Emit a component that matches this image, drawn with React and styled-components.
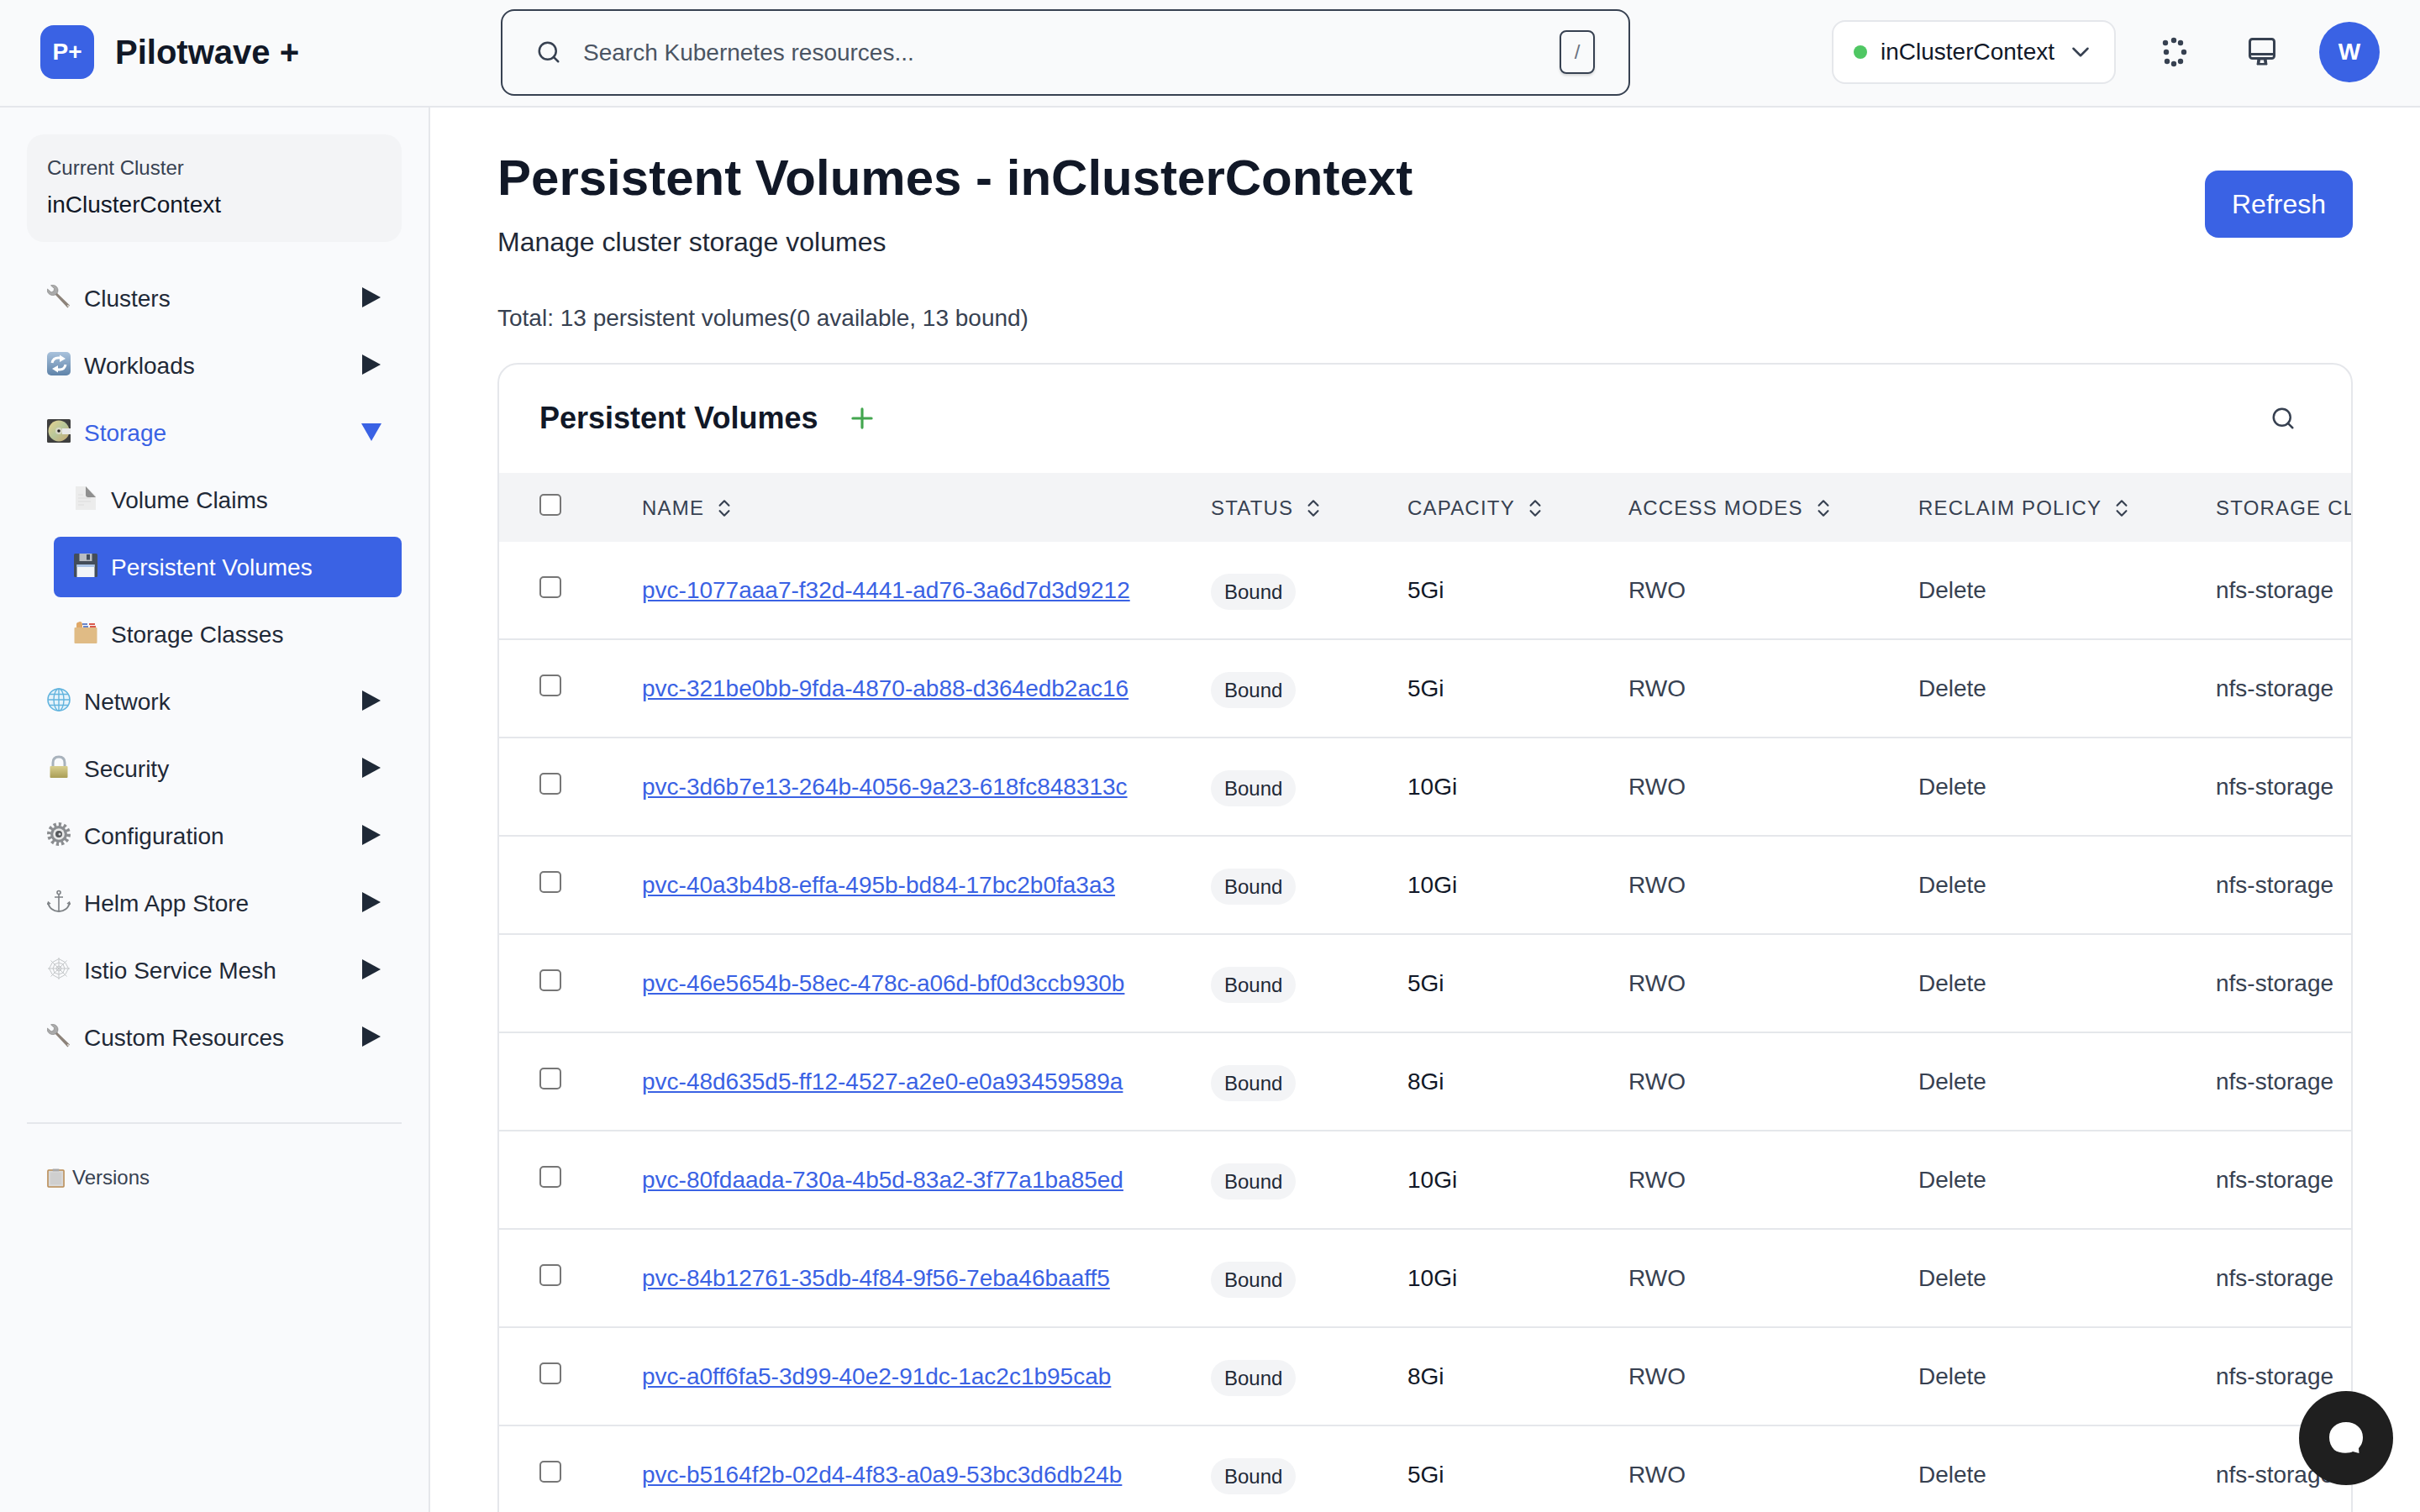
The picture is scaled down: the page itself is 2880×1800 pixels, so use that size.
import styled, { createGlobalStyle } from 'styled-components';
import { ChevronDown, ChevronsUpDown, Plus, Search } from 'lucide-react';

const GlobalStyle = createGlobalStyle`
  html, body {
    margin: 0;
    height: 100%;
    background: #fff;
    font-family: 'Liberation Sans', Arial, sans-serif;
    color: #111827;
  }
  * { box-sizing: border-box; }
`;

const PRIMARY = '#3a62e4';

const volumes = [
  ['pvc-1077aaa7-f32d-4441-ad76-3a6d7d3d9212', '5Gi'],
  ['pvc-321be0bb-9fda-4870-ab88-d364edb2ac16', '5Gi'],
  ['pvc-3d6b7e13-264b-4056-9a23-618fc848313c', '10Gi'],
  ['pvc-40a3b4b8-effa-495b-bd84-17bc2b0fa3a3', '10Gi'],
  ['pvc-46e5654b-58ec-478c-a06d-bf0d3ccb930b', '5Gi'],
  ['pvc-48d635d5-ff12-4527-a2e0-e0a93459589a', '8Gi'],
  ['pvc-80fdaada-730a-4b5d-83a2-3f77a1ba85ed', '10Gi'],
  ['pvc-84b12761-35db-4f84-9f56-7eba46baaff5', '10Gi'],
  ['pvc-a0ff6fa5-3d99-40e2-91dc-1ac2c1b95cab', '8Gi'],
  ['pvc-b5164f2b-02d4-4f83-a0a9-53bc3d6db24b', '5Gi'],
];

const columns = [
  { label: 'Name', width: 677 },
  { label: 'Status', width: 234 },
  { label: 'Capacity', width: 263 },
  { label: 'Access Modes', width: 345 },
  { label: 'Reclaim Policy', width: 354 },
  { label: 'Storage Class', width: 400 },
];

const Wrench = () => (
  <svg viewBox="0 0 28 28" width="28" height="28">
    <path d="M10.500 8.500 L27 24.500 L24.500 27.500 L8.500 10.500 Z" fill="#8c8279" />
    <path d="M0.500 5 L5 9 L8 7.500 L8.500 4.500 L4.500 0.800 C8 -0.500 12.500 1.500 13 6 C13.300 9.500 11 12 8 12.500 C3 13 -0.500 9.500 0.500 5 Z" fill="#aaaaaa" stroke="#7c7c7c" strokeWidth="0.6" />
    <circle cx="25" cy="25" r="1" fill="#e5e0da" />
  </svg>
);

const Cycle = () => (
  <svg viewBox="0 0 28 28" width="28" height="28">
    <defs>
      <linearGradient id="cycleBg" x1="0" y1="0" x2="0" y2="1">
        <stop offset="0" stopColor="#a9c2dc" />
        <stop offset="1" stopColor="#5f83a9" />
      </linearGradient>
    </defs>
    <rect width="28" height="28" rx="5" fill="url(#cycleBg)" />
    <path d="M6 13 C7 8 11 6.500 15 7 L18 8.500" fill="none" stroke="#fff" strokeWidth="3" />
    <path d="M15 3.500 L22 8 L15 12 Z" fill="#fff" />
    <path d="M22 15 C21 20 17 21.500 13 21 L10 19.500" fill="none" stroke="#fff" strokeWidth="3" />
    <path d="M13 24.500 L6 20 L13 16 Z" fill="#fff" />
  </svg>
);

const Disc = () => (
  <svg viewBox="0 0 28 28" width="28" height="28">
    <defs>
      <linearGradient id="discFace" x1="0" y1="0" x2="1" y2="1">
        <stop offset="0" stopColor="#e9d28f" />
        <stop offset="0.5" stopColor="#b7c79a" />
        <stop offset="1" stopColor="#c9a56d" />
      </linearGradient>
    </defs>
    <rect width="28" height="28" rx="1.500" fill="#3f3f3f" />
    <circle cx="14" cy="14" r="12.500" fill="url(#discFace)" />
    <rect x="18" y="11" width="10" height="7" fill="#e8e8e8" />
    <circle cx="14" cy="14" r="4" fill="#d8d8c8" />
    <circle cx="14" cy="14" r="1.800" fill="#222" />
  </svg>
);

const PageIcon = () => (
  <svg viewBox="0 0 28 28" width="28" height="28">
    <path d="M2 0 H14 L26 11 V28 H2 Z" fill="#ececec" />
    <path d="M14 0 L26 13 H17 C15 13 14 12 14 10 Z" fill="#8f8f8f" />
    <path d="M5 10 H11 M5 14 H20 M5 18 H20 M5 22 H12" stroke="#dcdcdc" strokeWidth="1" />
  </svg>
);

const Floppy = () => (
  <svg viewBox="0 0 28 28" width="28" height="28">
    <rect width="28" height="28" rx="1.500" fill="#434d5a" />
    <rect x="6.500" y="0" width="15" height="9" fill="#b9bdc2" />
    <rect x="15" y="1" width="4" height="6.500" fill="#434d5a" />
    <rect x="3.500" y="13" width="21" height="15" fill="#f2f5f8" />
    <rect x="3.500" y="13" width="21" height="3" fill="#a9c3e6" />
  </svg>
);

const CardBox = () => (
  <svg viewBox="0 0 28 28" width="28" height="28">
    <path d="M3 8 V4 C3 2.500 4 2 7 1 C9 1 9.500 2 10 4 V8 Z" fill="#e0a868" />
    <rect x="10" y="3" width="6" height="2" fill="#6a86c9" />
    <rect x="11" y="6" width="6" height="2" fill="#6a86c9" />
    <rect x="18" y="3" width="7" height="2" fill="#d9594c" />
    <rect x="19" y="6" width="7" height="2" fill="#d9594c" />
    <rect x="0.500" y="8" width="27" height="19" rx="1" fill="#e0bb85" />
  </svg>
);

const Globe = () => (
  <svg viewBox="0 0 28 28" width="28" height="28">
    <circle cx="14" cy="14" r="13" fill="#e6f3fb" stroke="#63b4de" strokeWidth="1.600" />
    <ellipse cx="14" cy="14" rx="6" ry="13" fill="none" stroke="#63b4de" strokeWidth="1.400" />
    <path d="M14 1 V27 M1 14 H27 M3 7.500 H25 M3 20.500 H25" stroke="#63b4de" strokeWidth="1.400" />
  </svg>
);

const Lock = () => (
  <svg viewBox="0 0 28 28" width="28" height="28">
    <defs>
      <linearGradient id="lockBody" x1="0" y1="0" x2="0" y2="1">
        <stop offset="0" stopColor="#d9cf8f" />
        <stop offset="1" stopColor="#a99d55" />
      </linearGradient>
    </defs>
    <path d="M7 14 V9 C7 4 10 2 14 2 C18 2 21 4 21 9 V14" fill="none" stroke="#a8b2bc" strokeWidth="3" />
    <rect x="3.500" y="13" width="21" height="14" rx="1" fill="url(#lockBody)" />
  </svg>
);

const Gear = () => (
  <svg viewBox="0 0 28 28" width="28" height="28">
    <circle cx="14" cy="14" r="11" fill="none" stroke="#8b8d90" strokeWidth="6" strokeDasharray="3 2.700" />
    <circle cx="14" cy="14" r="10" fill="#8a8d91" />
    <circle cx="14" cy="14" r="6.800" fill="#e8e8e8" />
    <circle cx="14" cy="14" r="4" fill="#55585c" />
    <circle cx="15" cy="14" r="1.500" fill="#d8d8d8" />
  </svg>
);

const Anchor = () => (
  <svg viewBox="0 0 28 28" width="28" height="28" fill="none" stroke="#7d8185" strokeWidth="1.600">
    <circle cx="14" cy="3.500" r="2" />
    <path d="M14 5.500 V26 M9 9 H19" />
    <path d="M1.500 16 C2 22 8 26 14 26 C20 26 26 22 26.500 16" strokeWidth="2" />
    <path d="M0.500 18 L1.500 15 L4 17 M27.500 18 L26.500 15 L24 17" />
  </svg>
);

const Web = () => (
  <svg viewBox="0 0 28 28" width="28" height="28" fill="none" stroke="#c4c7c9" strokeWidth="1">
    <path d="M14 1 V27 M1 14 H27 M4.500 4.500 L23.500 23.500 M23.500 4.500 L4.500 23.500" />
    <path d="M14 2.500 L21.500 6.500 L25.500 14 L21.500 21.500 L14 25.500 L6.500 21.500 L2.500 14 L6.500 6.500 Z" />
    <path d="M14 7 L19 9 L21 14 L19 19 L14 21 L9 19 L7 14 L9 9 Z" />
    <path d="M14 11 L16 12 L17 14 L16 16 L14 17 L12 16 L11 14 L12 12 Z" />
  </svg>
);

const Clipboard = () => (
  <svg viewBox="0 0 22 24" width="21" height="23">
    <rect x="1" y="2" width="20" height="21" rx="1" fill="#d9d9d9" stroke="#b98a52" strokeWidth="1.600" />
    <rect x="4" y="5" width="14" height="15" fill="#cfcfcf" />
    <rect x="7" y="0.500" width="8" height="3" fill="#a8a8a8" />
  </svg>
);

const PageShell = styled.div`
  display: flex;
  flex-direction: column;
  height: 1800px;
  overflow: hidden;
`;

const TopBar = styled.header`
  display: flex;
  align-items: center;
  flex: none;
  height: 128px;
  padding: 0 48px 2px 48px;
  background: #f9fafb;
  border-bottom: 2px solid #e5e7eb;
`;

const Brand = styled.div`
  display: flex;
  align-items: center;
  gap: 25px;
  width: 548px;
`;

const LogoMark = styled.div`
  display: flex;
  align-items: center;
  justify-content: center;
  width: 64px;
  height: 64px;
  border-radius: 16px;
  background: ${PRIMARY};
  color: #fff;
  font-size: 28px;
  font-weight: 700;
`;

const BrandName = styled.div`
  font-size: 40px;
  font-weight: 700;
  color: #111827;
`;

const SearchBox = styled.div`
  display: flex;
  align-items: center;
  width: 1344px;
  height: 103px;
  padding: 0 40px 0 40px;
  border: 2px solid #374151;
  border-radius: 16px;
  background: #f9fafb;
  color: #374151;
`;

const SearchHint = styled.span`
  flex: 1;
  margin-left: 26px;
  padding-top: 2px;
  font-size: 28px;
  color: #4b5563;
`;

const SlashKey = styled.kbd`
  display: flex;
  align-items: center;
  justify-content: center;
  width: 42px;
  height: 52px;
  border: 2px solid #374151;
  border-radius: 8px;
  box-shadow: 0 2px 3px rgba(0, 0, 0, 0.15);
  font-family: inherit;
  font-size: 24px;
  color: #6b7280;
`;

const TopActions = styled.div`
  display: flex;
  align-items: center;
  gap: 32px;
  margin-left: auto;
`;

const ClusterSelect = styled.div`
  display: flex;
  align-items: center;
  width: 338px;
  height: 76px;
  margin-right: 2px;
  padding: 0 23px 0 24px;
  border: 2px solid #e5e7eb;
  border-radius: 16px;
  background: #fff;
  font-size: 28px;
  color: #111827;
`;

const StatusDot = styled.span`
  flex: none;
  width: 16px;
  height: 16px;
  margin-right: 16px;
  border-radius: 50%;
  background: #4fc763;
`;

const ClusterName = styled.span`
  flex: 1;
`;

const IconSlot = styled.div`
  display: flex;
  align-items: center;
  justify-content: center;
  width: 72px;
  height: 72px;
`;

const Avatar = styled.div`
  display: flex;
  align-items: center;
  justify-content: center;
  width: 72px;
  height: 72px;
  border-radius: 50%;
  background: ${PRIMARY};
  color: #fff;
  font-size: 28px;
  font-weight: 700;
`;

const Body = styled.div`
  display: flex;
  flex: 1;
  min-height: 0;
`;

const Sidebar = styled.aside`
  flex: none;
  width: 512px;
  padding: 32px 32px 0;
  background: #f9fafc;
  border-right: 2px solid #e5e7eb;
`;

const ClusterCard = styled.div`
  height: 128px;
  padding: 24px 24px 0;
  margin-bottom: 31px;
  border-radius: 20px;
  background: #f3f4f6;
`;

const ClusterLabel = styled.div`
  font-size: 24px;
  line-height: 32px;
  color: #374151;
`;

const ClusterValue = styled.div`
  margin-top: 8px;
  font-size: 28px;
  line-height: 40px;
  color: #111827;
`;

const NavList = styled.nav`
  display: flex;
  flex-direction: column;
  gap: 8px;
`;

const NavRow = styled.div`
  display: flex;
  align-items: center;
  height: 72px;
  margin-left: ${(p) => (p.$sub ? '32px' : '0')};
  padding-left: 24px;
  padding-right: 24px;
  border-radius: 8px;
  background: ${(p) => (p.$active ? PRIMARY : 'transparent')};
  color: ${(p) => (p.$active ? '#fff' : p.$open ? PRIMARY : '#1f2937')};
  font-size: 28px;
`;

const NavIcon = styled.span`
  display: flex;
  align-items: center;
  justify-content: center;
  flex: none;
  width: 28px;
  height: 28px;
  margin-right: 16px;
  margin-top: -4px;
`;

const NavLabel = styled.span`
  flex: 1;
  padding-top: 1px;
`;

const Caret = styled.svg`
  display: block;
  flex: none;
  width: 24px;
  height: 24px;
  margin-top: -2px;
  fill: ${(p) => (p.$open ? PRIMARY : '#1f2937')};
`;

const SideDivider = styled.hr`
  height: 2px;
  margin: 65px 0 0;
  border: 0;
  background: #e5e7eb;
`;

const VersionLink = styled.div`
  display: flex;
  align-items: center;
  gap: 9px;
  margin-top: 50px;
  padding-left: 24px;
  font-size: 24px;
  color: #374151;
`;

const Main = styled.main`
  flex: 1;
  min-width: 0;
  padding: 48px 80px 0;
  background: #fff;
`;

const PageHead = styled.div`
  display: flex;
  align-items: center;
  justify-content: space-between;
`;

const PageTitle = styled.h1`
  margin: 0;
  font-size: 60px;
  line-height: 72px;
  font-weight: 700;
  color: #111827;
`;

const PageSub = styled.p`
  margin: 18px 0 0;
  font-size: 32px;
  line-height: 44px;
  color: #1f2937;
`;

const RefreshButton = styled.button`
  width: 176px;
  height: 80px;
  border: 0;
  border-radius: 16px;
  background: ${PRIMARY};
  color: #fff;
  font-family: inherit;
  font-size: 32px;
  font-weight: 500;
`;

const Totals = styled.div`
  margin-top: 49px;
  font-size: 28px;
  line-height: 40px;
  color: #374151;
`;

const TableCard = styled.section`
  margin-top: 33px;
  border: 2px solid #e5e7eb;
  border-radius: 24px 24px 0 0;
  overflow: hidden;
`;

const CardHead = styled.div`
  display: flex;
  align-items: center;
  height: 129px;
  padding: 0 48px 2px;
  gap: 34px;
`;

const CardTitle = styled.h2`
  margin: 0;
  font-size: 36px;
  font-weight: 700;
  color: #111827;
`;

const CardSearch = styled.span`
  display: flex;
  margin-left: auto;
  margin-right: 18px;
  color: #374151;
`;

const Table = styled.table`
  table-layout: fixed;
  width: 2443px;
  border-collapse: separate;
  border-spacing: 0;
`;

const HeadCell = styled.th`
  height: 82px;
  padding: 2px 0 0;
  background: #f3f4f6;
  text-align: left;
  font-size: 24px;
  font-weight: 400;
  letter-spacing: 1.2px;
  text-transform: uppercase;
  color: #374151;
  white-space: nowrap;
`;

const SortLabel = styled.span`
  display: inline-flex;
  align-items: center;
  gap: 11px;
  svg { color: #374151; }
`;

const Cell = styled.td`
  height: 117px;
  padding: 1px 0 0;
  border-bottom: 2px solid #e5e7eb;
  font-size: 28px;
  color: ${(p) => (p.$strong ? '#111827' : '#374151')};
  white-space: nowrap;
`;

const CheckCell = styled.div`
  display: flex;
  padding-left: 48px;
  margin-top: -8px;
`;

const Check = styled.input.attrs({ type: 'checkbox' })`
  appearance: none;
  display: block;
  width: 26px;
  height: 26px;
  margin: 0;
  border: 2px solid #767676;
  border-radius: 5px;
  background: #fff;
`;

const VolumeLink = styled.a`
  color: ${PRIMARY};
  text-decoration: underline;
`;

const Badge = styled.span`
  display: inline-block;
  height: 43px;
  margin-top: 3px;
  padding: 0 16px;
  border-radius: 22px;
  background: #f3f4f6;
  font-size: 24px;
  line-height: 44px;
  color: #1f2937;
`;

const ChatBubble = styled.button`
  position: fixed;
  right: 32px;
  bottom: 32px;
  display: flex;
  align-items: center;
  justify-content: center;
  width: 112px;
  height: 112px;
  padding: 0;
  border: 0;
  border-radius: 50%;
  background: #1f1f1f;
`;

const navGroups = [
  { label: 'Clusters', icon: Wrench },
  { label: 'Workloads', icon: Cycle },
  {
    label: 'Storage',
    icon: Disc,
    open: true,
    children: [
      { label: 'Volume Claims', icon: PageIcon },
      { label: 'Persistent Volumes', icon: Floppy, active: true },
      { label: 'Storage Classes', icon: CardBox },
    ],
  },
  { label: 'Network', icon: Globe },
  { label: 'Security', icon: Lock },
  { label: 'Configuration', icon: Gear },
  { label: 'Helm App Store', icon: Anchor },
  { label: 'Istio Service Mesh', icon: Web },
  { label: 'Custom Resources', icon: Wrench },
];

const NavItem = ({ item, sub }) => {
  const Icon = item.icon;

  return (
    <NavRow $sub={sub} $active={item.active} $open={item.open}>
      <NavIcon>
        <Icon />
      </NavIcon>
      <NavLabel>{item.label}</NavLabel>
      {!sub && (
        <Caret viewBox="0 0 24 24" $open={item.open}>
          {item.open ? <path d="M0 2 H24 L12 23 Z" /> : <path d="M1 0 L23 12 L1 24 Z" />}
        </Caret>
      )}
    </NavRow>
  );
};

const NavGroup = ({ item }) => (
  <>
    <NavItem item={item} />
    {item.children && item.children.map((child) => <NavItem key={child.label} item={child} sub />)}
  </>
);

const App = () => (
  <PageShell>
    <GlobalStyle />
    <TopBar>
      <Brand>
        <LogoMark>P+</LogoMark>
        <BrandName>Pilotwave +</BrandName>
      </Brand>
      <SearchBox>
        <Search size={30} strokeWidth={2} />
        <SearchHint>Search Kubernetes resources...</SearchHint>
        <SlashKey>/</SlashKey>
      </SearchBox>
      <TopActions>
        <ClusterSelect>
          <StatusDot />
          <ClusterName>inClusterContext</ClusterName>
          <ChevronDown size={34} color="#374151" strokeWidth={1.8} />
        </ClusterSelect>
        <IconSlot>
          <svg viewBox="0 0 36 36" width="36" height="36" fill="#374151">
            <circle cx="7" cy="7" r="3.2" />
            <circle cx="17" cy="4" r="3.2" />
            <circle cx="25" cy="7" r="3.2" />
            <circle cx="8" cy="18" r="3.2" />
            <circle cx="29" cy="18" r="3.200" />
            <circle cx="9" cy="29" r="3.2" />
            <circle cx="17" cy="32" r="3.2" />
            <circle cx="25" cy="29" r="3.2" />
          </svg>
        </IconSlot>
        <IconSlot>
          <svg viewBox="0 0 36 36" width="36" height="36" fill="none" stroke="#374151">
            <rect x="3.500" y="2.500" width="29" height="23" rx="3" strokeWidth="3" />
            <path d="M3.500 20.500 H32.500" strokeWidth="3" />
            <path d="M13 26 L12 33 H24 L23 26 Z" fill="#374151" strokeWidth="1" />
            <path d="M16 27.500 H20 L20.500 31 H15.500 Z" fill="#f9fafb" stroke="none" />
          </svg>
        </IconSlot>
        <Avatar>W</Avatar>
      </TopActions>
    </TopBar>

    <Body>
      <Sidebar>
        <ClusterCard>
          <ClusterLabel>Current Cluster</ClusterLabel>
          <ClusterValue>inClusterContext</ClusterValue>
        </ClusterCard>
        <NavList>
          {navGroups.map((item) => (
            <NavGroup key={item.label} item={item} />
          ))}
        </NavList>
        <SideDivider />
        <VersionLink>
          <Clipboard />
          Versions
        </VersionLink>
      </Sidebar>

      <Main>
        <PageHead>
          <div>
            <PageTitle>Persistent Volumes - inClusterContext</PageTitle>
            <PageSub>Manage cluster storage volumes</PageSub>
          </div>
          <RefreshButton>Refresh</RefreshButton>
        </PageHead>
        <Totals>Total: 13 persistent volumes(0 available, 13 bound)</Totals>

        <TableCard>
          <CardHead>
            <CardTitle>Persistent Volumes</CardTitle>
            <Plus size={38} color="#43a64f" strokeWidth={2} />
            <CardSearch>
              <Search size={30} strokeWidth={2} />
            </CardSearch>
          </CardHead>
          <Table>
            <colgroup>
              <col width="170" />
              {columns.map((col) => (
                <col key={col.label} width={col.width} />
              ))}
            </colgroup>
            <thead>
              <tr>
                <HeadCell>
                  <CheckCell>
                    <Check />
                  </CheckCell>
                </HeadCell>
                {columns.map((col) => (
                  <HeadCell key={col.label}>
                    <SortLabel>
                      {col.label}
                      {col.label !== 'Storage Class' && <ChevronsUpDown size={26} strokeWidth={2} />}
                    </SortLabel>
                  </HeadCell>
                ))}
              </tr>
            </thead>
            <tbody>
              {volumes.map(([name, capacity]) => (
                <tr key={name}>
                  <Cell>
                    <CheckCell>
                      <Check />
                    </CheckCell>
                  </Cell>
                  <Cell>
                    <VolumeLink href="#">{name}</VolumeLink>
                  </Cell>
                  <Cell>
                    <Badge>Bound</Badge>
                  </Cell>
                  <Cell $strong>{capacity}</Cell>
                  <Cell>RWO</Cell>
                  <Cell>Delete</Cell>
                  <Cell>nfs-storage</Cell>
                </tr>
              ))}
            </tbody>
          </Table>
        </TableCard>
      </Main>
    </Body>

    <ChatBubble aria-label="chat">
      <svg viewBox="0 0 40 38" width="40" height="38">
        <path d="M20 0 C31 0 40 7 40 18 C40 25 37 29 35 31 L35.500 37 L28 35 C25 37 12 38 6 33 C2 29 0 24 0 18 C0 7 9 0 20 0 Z" fill="#fff" />
      </svg>
    </ChatBubble>
  </PageShell>
);

export default App;
